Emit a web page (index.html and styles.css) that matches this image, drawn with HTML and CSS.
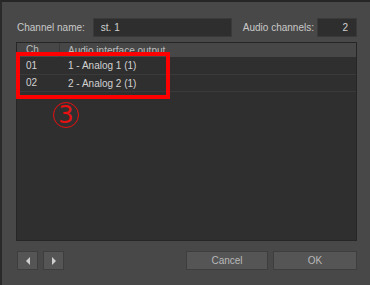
FILE: index.html
```html
<!DOCTYPE html>
<html lang="en">
<head>
  <meta charset="UTF-8" />
  <title>Channel settings</title>
  <link rel="stylesheet" href="styles.css">
</head>
<body>
  <div class="dialog">
    <div class="top-row">
      <span class="lbl">Channel name:</span>
      <div class="field name">st. 1</div>
      <span class="lbl ch-lbl">Audio channels:</span>
      <div class="field count">2</div>
    </div>

    <div class="table">
      <div class="thead">
        <span class="c1">Ch</span>
        <span class="c2">Audio interface output</span>
      </div>
      <div class="row">
        <span class="c1">01</span>
        <span class="c2">1 - Analog 1 (1)</span>
      </div>
      <div class="row">
        <span class="c1">02</span>
        <span class="c2">2 - Analog 2 (1)</span>
      </div>

      <!-- annotation overlay -->
      <div class="highlight"></div>
      <div class="marker">3</div>
    </div>

    <div class="bottom">
      <div class="nav">
        <button class="btn arrow" aria-label="Previous"><span class="tri left"></span></button>
        <button class="btn arrow" aria-label="Next"><span class="tri right"></span></button>
      </div>
      <div class="actions">
        <button class="btn cancel">Cancel</button>
        <button class="btn ok">OK</button>
      </div>
    </div>
  </div>
</body>
</html>
```

FILE: styles.css
```css
* {
  box-sizing: border-box;
}
body {
  margin: 0;
  background: #222;
  font-family: 'Liberation Sans', Arial, sans-serif;
  font-size: 10px;
  color: #c8c8c8;
}
.dialog {
  width: 370px;
  height: 285px;
  background: #484848;
  border-top: 2px solid #262626;
  border-left: 2px solid #2a2a2a;
  padding: 16px 13px 0 14px;
  display: flex;
  flex-direction: column;
}
.top-row {
  display: flex;
  align-items: center;
  height: 19px;
}
.lbl {
  padding-left: 1px;
  white-space: nowrap;
}
.ch-lbl {
  margin-left: 10px;
}
.field {
  height: 19px;
  background: #2e2e2e;
  border: 1px solid #3a3a3a;
  line-height: 17px;
  color: #d0d0d0;
}
.name {
  width: 139px;
  margin-left: 8px;
  padding-left: 7px;
}
.count {
  width: 40px;
  margin-left: auto;
  text-align: right;
  padding-right: 8px;
}
.table {
  position: relative;
  margin-top: 5px;
  height: 199px;
  background: #2f2f2f;
  border: 1px solid #262626;
}
.thead,
.row {
  display: flex;
  align-items: center;
}
.thead {
  height: 14px;
  background: #474747;
  color: #bdbdbd;
}
.thead .c1 {
  border-right: 1px solid #3a3a3a;
  height: 14px;
}
.row {
  height: 18px;
  border-bottom: 1px solid #3a3a3a;
  color: #d2d2d2;
}
.row + .row {
  height: 17px;
}
.c1 {
  flex: none;
  width: 43px;
  padding-left: 9px;
  line-height: 14px;
}
.c2 {
  padding-left: 8px;
}
.highlight {
  position: absolute;
  left: -1px;
  top: 9px;
  width: 154px;
  height: 47px;
  border: 4px solid #f00;
}
.marker {
  position: absolute;
  left: 36px;
  top: 59px;
  width: 26px;
  height: 26px;
  border: 1px solid #e81010;
  border-radius: 50%;
  color: #e81010;
  font-family: 'DejaVu Sans', sans-serif;
  font-size: 24px;
  line-height: 24px;
  text-align: center;
}
.bottom {
  display: flex;
  justify-content: space-between;
  margin-top: 10px;
  padding-left: 1px;
}
.nav,
.actions {
  display: flex;
  gap: 5px;
}
.btn {
  height: 19px;
  background: #555;
  border: 1px solid #3e3e3e;
  color: #b8b8b8;
  font-family: 'Liberation Sans', Arial, sans-serif;
  font-size: 10px;
  padding: 0;
  display: flex;
  align-items: center;
  justify-content: center;
}
.arrow {
  width: 21px;
}
.cancel {
  width: 82px;
}
.ok {
  width: 84px;
}
.tri {
  width: 0;
  height: 0;
  border-top: 4px solid transparent;
  border-bottom: 4px solid transparent;
}
.tri.left {
  border-right: 4px solid #cfcfcf;
}
.tri.right {
  border-left: 4px solid #cfcfcf;
}
```
